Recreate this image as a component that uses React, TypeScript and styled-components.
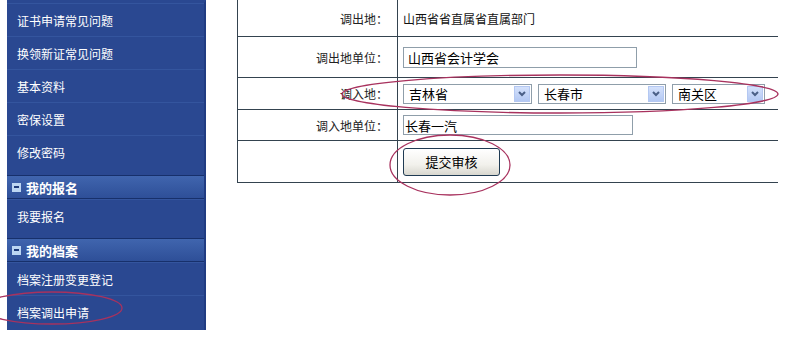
import React from 'react';
import styled, { createGlobalStyle } from 'styled-components';

const GlobalStyle = createGlobalStyle`
  html, body {
    margin: 0;
    padding: 0;
    background: #ffffff;
  }
  body {
    font-family: "Noto Sans CJK SC", "DejaVu Sans", sans-serif;
    font-size: 12px;
  }
`;

const Page = styled.div`
  position: relative;
  display: flex;
  align-items: flex-start;
  gap: 31px;
  padding-left: 7px;
  width: 792px;
  height: 344px;
  overflow: hidden;
  box-sizing: border-box;
`;

const Sidebar = styled.div`
  display: flex;
  flex-direction: column;
  width: 199px;
  height: 330px;
  box-sizing: border-box;
  background: #2a4891;
  border-right: 2px solid #203c82;
  border-top: 3px solid #2a4891;
`;

const Group = styled.div<{ $pad?: number }>`
  display: flex;
  flex-direction: column;
  padding-bottom: ${(p) => p.$pad ?? 0}px;
`;

const Item = styled.div`
  display: flex;
  align-items: center;
  height: 33px;
  padding-left: 10px;
  box-sizing: border-box;
  color: #ffffff;
  font-size: 12px;
  border-top: 1px solid #34559e;
`;

const Header = styled.div`
  display: flex;
  align-items: center;
  gap: 5px;
  height: 24px;
  padding-left: 5px;
  box-sizing: border-box;
  background: linear-gradient(#4065ae, #2e4f98);
  border-top: 1px solid #17306b;
  border-bottom: 1px solid #17306b;
  color: #ffffff;
  font-size: 13px;
  font-weight: bold;
`;

const MinusIcon = styled.span`
  display: flex;
  align-items: center;
  justify-content: center;
  width: 9px;
  height: 9px;
  background: #bcd6f2;
  &::after {
    content: '';
    width: 5px;
    height: 2px;
    background: #1d3a7a;
  }
`;

const Form = styled.div`
  display: flex;
  flex-direction: column;
  width: 540px;
  border-left: 1px solid #34434f;
`;

const Row = styled.div<{ $h: number }>`
  display: grid;
  grid-template-columns: 160px 1fr;
  height: ${(p) => p.$h}px;
  border-bottom: 1px solid #34434f;
`;

const Label = styled.div`
  display: flex;
  align-items: center;
  justify-content: flex-end;
  padding-right: 9px;
  border-right: 1px solid #34434f;
  color: #222222;
  font-size: 12px;
`;

const Value = styled.div<{ $gap?: number }>`
  display: flex;
  align-items: center;
  gap: ${(p) => p.$gap ?? 0}px;
  padding-left: 5px;
  color: #111111;
  font-size: 12px;
`;

const TextBox = styled.div<{ $w: number; $h: number; $pad?: number }>`
  display: flex;
  align-items: center;
  width: ${(p) => p.$w}px;
  height: ${(p) => p.$h}px;
  padding-left: ${(p) => p.$pad ?? 4}px;
  box-sizing: border-box;
  border: 1px solid #8f9eaa;
  color: #000000;
  font-size: 13px;
`;

const Select = styled.div<{ $w: number }>`
  display: flex;
  align-items: center;
  justify-content: space-between;
  width: ${(p) => p.$w}px;
  height: 20px;
  padding: 1px 1px 1px 5px;
  box-sizing: border-box;
  border: 1px solid #8f9eaa;
  color: #000000;
  font-size: 13px;
`;

const DropButton = styled.div`
  display: flex;
  align-items: center;
  justify-content: center;
  width: 16px;
  height: 16px;
  box-sizing: border-box;
  background: linear-gradient(#d4e1fb, #b3c8f3);
  border: 1px solid #b4c8f2;
`;

const Button = styled.div`
  display: flex;
  align-items: center;
  justify-content: center;
  width: 97px;
  height: 28px;
  box-sizing: border-box;
  border: 1px solid #1f3a52;
  border-radius: 3px;
  background: linear-gradient(#ffffff, #f2f1ec 60%, #d8d7cf);
  color: #000000;
  font-size: 13px;
`;

const Annotation = styled.svg`
  position: absolute;
  left: 0;
  top: 0;
  pointer-events: none;
`;

const Chevron = () => (
  <svg width="8" height="6" viewBox="0 0 8 6">
    <path d="M1 1 L4 4 L7 1" fill="none" stroke="#4a5f87" strokeWidth="2" />
  </svg>
);

export default function App() {
  return (
    <>
      <GlobalStyle />
      <Page>
        <Sidebar>
          <Group $pad={7}>
            <Item>证书申请常见问题</Item>
            <Item>换领新证常见问题</Item>
            <Item>基本资料</Item>
            <Item>密保设置</Item>
            <Item>修改密码</Item>
          </Group>
          <Header>
            <MinusIcon />
            我的报名
          </Header>
          <Group $pad={6}>
            <Item>我要报名</Item>
          </Group>
          <Header>
            <MinusIcon />
            我的档案
          </Header>
          <Group>
            <Item>档案注册变更登记</Item>
            <Item>档案调出申请</Item>
          </Group>
        </Sidebar>

        <Form>
          <Row $h={36}>
            <Label>调出地：</Label>
            <Value>山西省省直属省直属部门</Value>
          </Row>
          <Row $h={40}>
            <Label>调出地单位：</Label>
            <Value>
              <TextBox $w={234} $h={21}>山西省会计学会</TextBox>
            </Value>
          </Row>
          <Row $h={31}>
            <Label>调入地：</Label>
            <Value $gap={6}>
              <Select $w={129}>
                吉林省
                <DropButton><Chevron /></DropButton>
              </Select>
              <Select $w={128}>
                长春市
                <DropButton><Chevron /></DropButton>
              </Select>
              <Select $w={93}>
                南关区
                <DropButton><Chevron /></DropButton>
              </Select>
            </Value>
          </Row>
          <Row $h={30}>
            <Label>调入地单位：</Label>
            <Value>
              <TextBox $w={230} $h={20} $pad={1}>长春一汽</TextBox>
            </Value>
          </Row>
          <Row $h={41}>
            <Label />
            <Value $gap={0}>
              <Button>提交审核</Button>
            </Value>
          </Row>
        </Form>

        <Annotation width="792" height="344" viewBox="0 0 792 344">
          <g fill="none" stroke="#a8325e" strokeWidth="1.3">
            <ellipse cx="560" cy="94" rx="218" ry="19" />
            <ellipse cx="450" cy="165" rx="60" ry="30" />
            <ellipse cx="52" cy="308" rx="70" ry="16" />
          </g>
        </Annotation>
      </Page>
    </>
  );
}
